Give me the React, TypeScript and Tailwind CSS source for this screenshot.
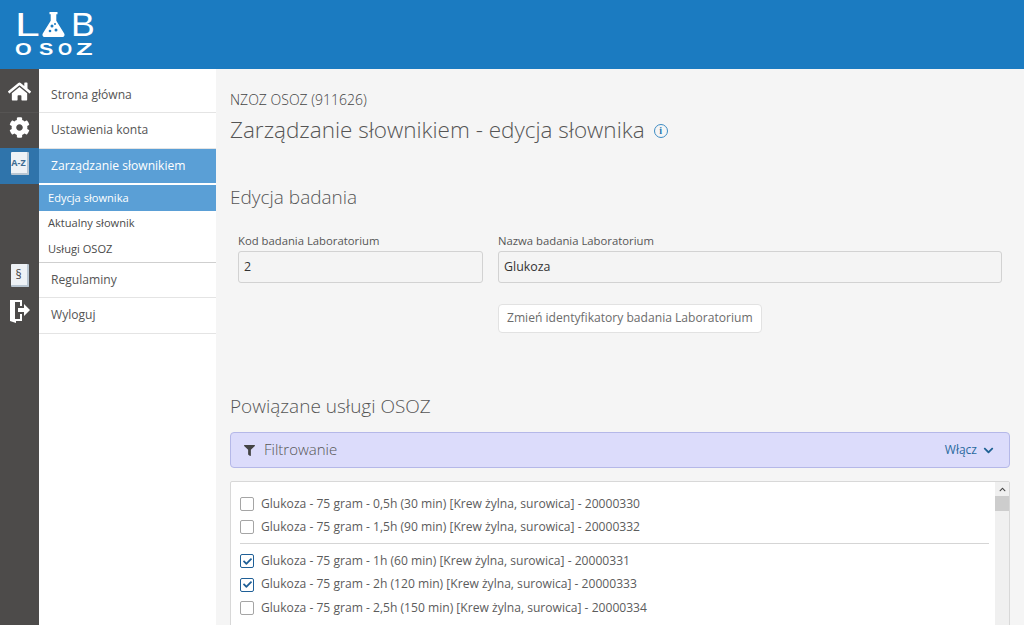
import React from "react";
import { FaHome, FaCog, FaFilter, FaChevronDown, FaCheck, FaChevronUp } from "react-icons/fa";

const font = { fontFamily: '"Open Sans", sans-serif' };

function Flask() {
  return (
    <svg width="23" height="25" viewBox="0 0 23 25" className="block shrink-0">
      <path fill="#fff" d="M7.5 0h8v2.2h-1.2v6.6l7.9 12.6c1 1.7-.2 3.6-2.2 3.6H3c-2 0-3.2-1.9-2.2-3.6L8.7 8.8V2.2H7.5z" />
      <circle cx="10" cy="14" r="1.5" fill="#1b7bc1" />
      <circle cx="14" cy="18" r="1.5" fill="#1b7bc1" />
      <circle cx="8" cy="19" r="1.3" fill="#1b7bc1" />
      <circle cx="13" cy="12" r="1" fill="#1b7bc1" />
    </svg>
  );
}

const OSOZ_LETTER = "inline-block origin-left";

function Logo() {
  return (
    <div className="ml-[15px] pt-[12px] w-[82px] flex flex-col text-white font-['Liberation_Sans',sans-serif]">
      <div className="flex items-end h-[25px]">
        <span className="w-[27px] text-[33px] leading-[25px] origin-left scale-x-[1.35]">L</span>
        <Flask />
        <span className="ml-[6px] w-[24px] text-[33px] leading-[25px] origin-left scale-x-[1.08]">B</span>
      </div>
      <div className="mt-[6px] flex text-[16.5px] leading-[13px] font-bold">
        <span className={`${OSOZ_LETTER} w-[24px] scale-x-[1.3]`}>O</span>
        <span className={`${OSOZ_LETTER} w-[19px] scale-x-[1.3]`}>S</span>
        <span className={`${OSOZ_LETTER} w-[18px] scale-x-[1.1]`}>O</span>
        <span className={`${OSOZ_LETTER} w-[17px] scale-x-[1.65]`}>Z</span>
      </div>
    </div>
  );
}

function BookIcon({ label, small }: { label: string; small?: boolean }) {
  return (
    <div className="w-[18px] h-[23px] bg-[#eef2f6] rounded-[1px] border-r-2 border-b-2 border-[#b9c6d2] flex items-center justify-center">
      <span className={small ? "text-[9px] font-bold leading-none text-[#3f6c92]" : "text-[12px] leading-none text-[#444]"}>{label}</span>
    </div>
  );
}

function DoorIcon() {
  return (
    <svg width="22" height="24" viewBox="0 0 22 24">
      <path fill="#fff" d="M1 1h12v6h-2V3H6v17h5v-5h2v7H7v2l-6-2z" />
      <path fill="#fff" d="M9 9h6V5l6 6-6 6v-4H9z" />
    </svg>
  );
}

function Rail() {
  return (
    <div className="w-[39px] shrink-0 bg-[#4d4b4a] flex flex-col items-center text-white">
      <div className="h-[44px] w-full flex items-center justify-center pt-[2px] border-b border-[#565453]"><FaHome className="text-[23px]" /></div>
      <div className="h-[35px] w-full flex items-center justify-center pb-[7px]"><FaCog className="text-[21px]" /></div>
      <div className="h-[36px] w-full bg-[#2f74ab] flex items-center justify-center pb-[6px]"><BookIcon label="A-Z" small /></div>
      <div className="h-[74px] shrink-0" />
      <div className="h-[35px] w-full flex items-center justify-center"><BookIcon label="§" /></div>
      <div className="h-[35px] w-full flex items-center justify-center"><DoorIcon /></div>
    </div>
  );
}

function NavItem({ children, active }: { children: React.ReactNode; active?: boolean }) {
  return (
    <div className={`h-[35.5px] pl-[12px] flex items-center text-[12.1px] border-b ${active ? "bg-[#5a9fd6] text-white border-white" : "bg-white text-[#555] border-[#e4e4e4]"}`}>
      {children}
    </div>
  );
}

function SubItem({ children, active }: { children: React.ReactNode; active?: boolean }) {
  return (
    <div className={`h-[25.5px] pl-[9px] flex items-center text-[11.1px] ${active ? "bg-[#5a9fd6] text-white" : "text-[#4a4a4a]"}`}>
      <span className="pt-[1px]">{children}</span>
    </div>
  );
}

function Sidebar() {
  return (
    <div className="w-[177px] shrink-0 bg-white pt-[8.5px] flex flex-col">
      <NavItem>Strona główna</NavItem>
      <NavItem>Ustawienia konta</NavItem>
      <NavItem active>Zarządzanie słownikiem</NavItem>
      <div className="border-b border-[#cfcfcf] pt-[1px]">
        <SubItem active>Edycja słownika</SubItem>
        <SubItem>Aktualny słownik</SubItem>
        <SubItem>Usługi OSOZ</SubItem>
      </div>
      <NavItem>Regulaminy</NavItem>
      <NavItem>Wyloguj</NavItem>
    </div>
  );
}

function Field({ label, value, className }: { label: string; value: string; className: string }) {
  return (
    <div className={className}>
      <div className="text-[11.3px] leading-[17px] text-[#555] mb-[2px]">{label}</div>
      <div className="h-[32px] rounded-[3px] border border-[#d2d2d2] bg-[#f4f4f4] px-[5px] flex items-center text-[12.4px] text-[#333]">{value}</div>
    </div>
  );
}

function Row({ checked, children }: { checked?: boolean; children: React.ReactNode }) {
  return (
    <div className="h-[23.3px] flex items-center text-[12.1px] text-[#5c5c5c] whitespace-nowrap">
      <span className={`w-[14px] h-[14px] mr-[7px] rounded-[2px] border-[1.5px] bg-white flex items-center justify-center ${checked ? "border-[#1f5f97]" : "border-[#a5a5a5]"}`}>
        {checked && <FaCheck className="text-[9px] text-[#1f5f97]" />}
      </span>
      {children}
    </div>
  );
}

export default function App() {
  return (
    <div className="h-[625px] w-[1024px] overflow-hidden flex flex-col bg-[#f5f5f5]" style={font}>
      <header className="h-[69px] shrink-0 bg-[#1b7bc1]"><Logo /></header>
      <div className="flex flex-1 min-h-0">
        <Rail />
        <Sidebar />
        <main className="flex-1 min-w-0 pl-[14px] pr-[14px] pt-[21px]">
          <div className="text-[14px] leading-[20px] font-light text-[#444]">NZOZ OSOZ (911626)</div>
          <div className="mt-[4px] flex items-center text-[#555]">
            <h1 className="text-[22.5px] leading-[32px] font-light">Zarządzanie słownikiem - edycja słownika</h1>
            <span className="ml-[9px] mt-[2px] w-[14px] h-[14px] rounded-full border-[1.5px] border-[#3d8cc4] text-[#2a77ae] text-[10px] font-bold leading-none flex items-center justify-center font-['Liberation_Serif',serif]">i</span>
          </div>
          <h2 className="mt-[38px] text-[19px] leading-[26px] font-light text-[#555]">Edycja badania</h2>
          <div className="mt-[22px] flex pl-[8px] pr-[8px] gap-[15px]">
            <Field className="w-[245px]" label="Kod badania Laboratorium" value="2" />
            <Field className="flex-1" label="Nazwa badania Laboratorium" value="Glukoza" />
          </div>
          <div className="mt-[21px] pl-[268px]">
            <button className="h-[29px] px-[8px] rounded-[4px] border border-[#e2e2e2] bg-white text-[12.1px] text-[#6c6c6c]">Zmień identyfikatory badania Laboratorium</button>
          </div>
          <h2 className="mt-[60px] text-[19px] leading-[26px] font-light text-[#555]">Powiązane usługi OSOZ</h2>
          <div className="mt-[13px] h-[36px] rounded-[4px] border border-[#b5b8e8] bg-[#dcdcfb] pl-[13px] pr-[15px] flex items-center">
            <FaFilter className="text-[11px] text-[#444]" />
            <span className="ml-[9px] pb-[1px] text-[15px] font-light text-[#555]">Filtrowanie</span>
            <span className="ml-auto text-[12px] text-[#2a6a9e]">Włącz</span>
            <FaChevronDown className="ml-[6px] text-[11px] text-[#1f6294]" />
          </div>
          <div className="mt-[13px] h-[200px] rounded-t-[2px] border border-[#d8d8d8] bg-white flex">
            <div className="flex-1 min-w-0 pl-[9px] pr-[6px] pt-[10px]">
              <Row>Glukoza - 75 gram - 0,5h (30 min) [Krew żylna, surowica] - 20000330</Row>
              <Row>Glukoza - 75 gram - 1,5h (90 min) [Krew żylna, surowica] - 20000332</Row>
              <div className="mt-[4.5px] mb-[5.5px] border-t border-[#d5d5d5]" />
              <Row checked>Glukoza - 75 gram - 1h (60 min) [Krew żylna, surowica] - 20000331</Row>
              <Row checked>Glukoza - 75 gram - 2h (120 min) [Krew żylna, surowica] - 20000333</Row>
              <Row>Glukoza - 75 gram - 2,5h (150 min) [Krew żylna, surowica] - 20000334</Row>
            </div>
            <div className="w-[14px] shrink-0 bg-[#f0f0f0] flex flex-col items-center">
              <div className="h-[14px] flex items-center justify-center"><FaChevronUp className="text-[7px] text-[#444]" /></div>
              <div className="w-full h-[15px] bg-[#cdcdcd]" />
            </div>
          </div>
        </main>
      </div>
    </div>
  );
}
